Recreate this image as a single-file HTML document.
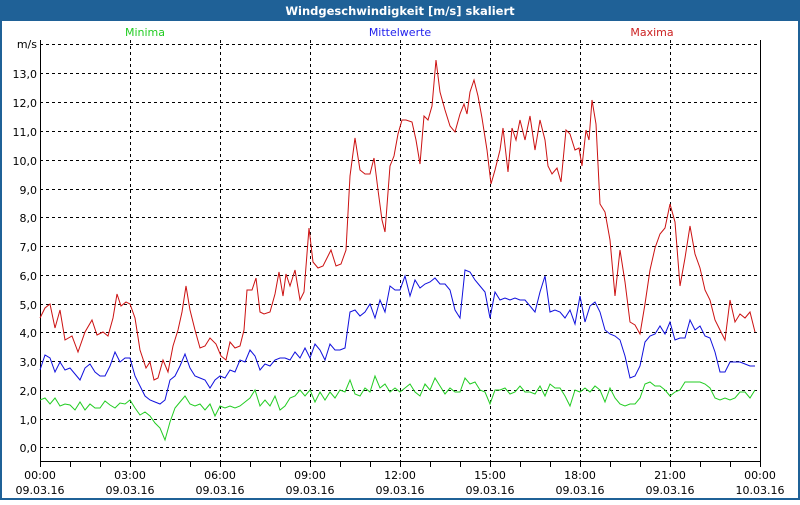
<!DOCTYPE html>
<html><head><style>
body{margin:0;width:800px;height:500px;overflow:hidden;background:#fff}
</style></head><body>
<svg width="800" height="500" xmlns="http://www.w3.org/2000/svg" font-family="'DejaVu Sans','Liberation Sans',sans-serif" font-size="11">
<rect x="0" y="0" width="800" height="500" fill="#1f6197"/>
<rect x="2" y="21" width="796" height="477" fill="#fff"/>
<text x="400" y="15" fill="#fff" font-weight="bold" font-size="11.5" text-anchor="middle">Windgeschwindigkeit [m/s] skaliert</text>
<text x="145" y="36" fill="#22cc22" text-anchor="middle">Minima</text>
<text x="400" y="36" fill="#2222ee" text-anchor="middle">Mittelwerte</text>
<text x="652" y="36" fill="#cc2222" text-anchor="middle">Maxima</text>
<g stroke="#000" stroke-dasharray="3,3" stroke-width="1">
<path d="M40 44.5H760M40 73.5H760M40 102.5H760M40 131.5H760M40 160.5H760M40 189.5H760M40 217.5H760M40 246.5H760M40 275.5H760M40 304.5H760M40 332.5H760M40 361.5H760M40 390.5H760M40 419.5H760M40 447.5H760"/>
<path d="M130.5 40V461M220.5 40V461M310.5 40V461M400.5 40V461M490.5 40V461M580.5 40V461M670.5 40V461"/>
</g>
<path d="M40.5 40V461.5H760.5V40" fill="none" stroke="#000"/>
<path d="M40.5 462v5M70.5 462v5M100.5 462v5M130.5 462v5M160.5 462v5M190.5 462v5M220.5 462v5M250.5 462v5M280.5 462v5M310.5 462v5M340.5 462v5M370.5 462v5M400.5 462v5M430.5 462v5M460.5 462v5M490.5 462v5M520.5 462v5M550.5 462v5M580.5 462v5M610.5 462v5M640.5 462v5M670.5 462v5M700.5 462v5M730.5 462v5M760.5 462v5" stroke="#000"/>
<g fill="#000" text-anchor="end">
<text x="37" y="48">m/s</text><text x="37" y="78">13,0</text><text x="37" y="107">12,0</text><text x="37" y="136">11,0</text><text x="37" y="165">10,0</text><text x="37" y="194">9,0</text><text x="37" y="222">8,0</text><text x="37" y="251">7,0</text><text x="37" y="280">6,0</text><text x="37" y="309">5,0</text><text x="37" y="337">4,0</text><text x="37" y="366">3,0</text><text x="37" y="395">2,0</text><text x="37" y="424">1,0</text><text x="37" y="452">0,0</text>
</g>
<g fill="#000" text-anchor="middle">
<text x="40" y="479">00:00</text><text x="40" y="494">09.03.16</text>
<text x="130" y="479">03:00</text><text x="130" y="494">09.03.16</text>
<text x="220" y="479">06:00</text><text x="220" y="494">09.03.16</text>
<text x="310" y="479">09:00</text><text x="310" y="494">09.03.16</text>
<text x="400" y="479">12:00</text><text x="400" y="494">09.03.16</text>
<text x="490" y="479">15:00</text><text x="490" y="494">09.03.16</text>
<text x="580" y="479">18:00</text><text x="580" y="494">09.03.16</text>
<text x="670" y="479">21:00</text><text x="670" y="494">09.03.16</text>
<text x="760" y="479">00:00</text><text x="760" y="494">10.03.16</text>
</g>
<g fill="none" stroke-width="1">
<polyline stroke="#22cc22" points="40,400 45,398 50,404 55,398 60,406 65,404 70,405 75,410 80,402 85,410 90,404 95,408 100,408 105,401 110,405 115,408 120,403 125,404 130,400 135,408 140,415 145,412 150,416 155,423 160,428 165,440 170,422 175,408 180,402 185,396 190,404 195,406 200,404 205,410 210,404 215,416 220,406 225,408 230,406 235,408 240,406 245,402 250,398 255,390 260,406 265,400 270,406 275,396 280,410 285,406 290,398 295,396 300,390 305,396 310,390 315,402 320,392 325,400 330,392 335,398 340,390 345,392 350,380 355,394 360,396 365,388 370,392 375,376 380,388 385,384 390,392 395,388 400,392 405,388 410,384 415,392 420,396 425,384 430,390 435,378 440,386 445,394 450,388 455,392 460,392 465,378 470,384 475,382 480,390 485,392 490,404 495,390 500,390 505,388 510,394 515,392 520,386 525,392 530,392 535,394 540,386 545,396 550,384 555,388 560,388 565,396 570,406 575,390 580,392 585,388 590,392 595,386 600,390 605,402 610,388 615,398 620,404 625,406 630,404 635,404 640,398 645,384 650,382 655,386 660,386 665,390 670,396 675,392 680,390 685,382 690,382 695,382 700,382 705,384 710,388 715,398 720,400 725,398 730,400 735,398 740,392 745,392 750,398 755,390"/>
<polyline stroke="#1010dd" points="40,370 45,355 50,358 55,372 60,362 65,370 70,368 75,374 80,380 85,368 90,364 95,372 100,376 105,376 110,366 115,352 120,362 125,358 130,358 135,376 140,386 145,396 150,400 155,402 160,404 165,400 170,380 175,376 180,366 185,354 190,368 195,376 200,378 205,380 210,388 215,380 220,376 225,378 230,370 235,372 240,360 245,362 250,350 255,356 260,370 265,364 270,366 275,360 280,358 285,358 290,360 295,352 300,358 305,348 310,358 315,344 320,350 325,360 330,344 335,350 340,350 345,348 350,312 355,310 360,316 365,312 370,304 375,318 380,300 385,312 390,286 395,290 400,290 405,276 410,296 415,280 420,288 425,284 430,282 435,278 440,284 445,284 450,290 455,310 460,318 465,270 470,272 475,280 480,286 485,292 490,318 495,292 500,300 505,298 510,300 515,298 520,300 525,300 530,306 535,312 540,292 545,276 550,312 555,310 560,312 565,318 570,310 575,324 580,296 585,322 590,306 595,302 600,312 605,330 610,334 615,336 620,340 625,356 630,378 635,376 640,366 645,342 650,336 655,334 660,326 665,334 670,322 675,340 680,338 685,338 690,320 695,330 700,326 705,336 710,338 715,352 720,372 725,372 730,362 735,362 740,362 745,364 750,366 755,366"/>
<polyline stroke="#cc1111" points="40,318 45,308 50,304 55,328 60,310 65,340 72,336 78,352 85,332 92,320 97,335 103,332 108,336 113,318 117,294 121,306 126,302 130,304 135,318 140,350 146,368 150,362 154,380 158,378 163,360 168,372 173,346 178,330 182,312 186,286 190,310 195,330 200,348 205,346 210,338 216,344 221,356 226,360 230,342 235,348 240,346 244,330 247,290 252,290 256,278 260,312 264,314 270,312 275,294 279,272 283,296 286,274 290,286 295,270 300,300 304,292 309,228 313,262 318,268 323,266 327,258 331,250 336,266 341,264 346,250 350,176 355,138 360,170 365,174 370,174 374,158 378,190 382,220 385,232 390,166 394,156 398,134 402,120 406,120 412,122 416,140 420,164 424,116 428,120 432,106 436,60 440,92 445,110 450,126 455,132 460,114 464,104 467,114 470,92 474,80 478,96 482,118 487,150 491,184 495,170 500,150 503,128 508,172 512,128 516,140 520,120 525,140 530,116 535,150 540,120 545,140 548,166 552,174 557,168 561,182 566,130 570,134 575,150 579,148 582,166 586,130 589,140 592,100 596,124 600,204 605,212 610,240 615,296 620,250 625,282 630,322 635,325 640,334 645,304 650,270 655,248 660,234 665,228 670,204 675,222 680,286 685,258 690,226 695,254 700,268 705,290 710,300 715,320 720,330 725,340 730,300 735,322 740,314 745,318 750,312 755,332"/>
</g>
</svg>
</body></html>
